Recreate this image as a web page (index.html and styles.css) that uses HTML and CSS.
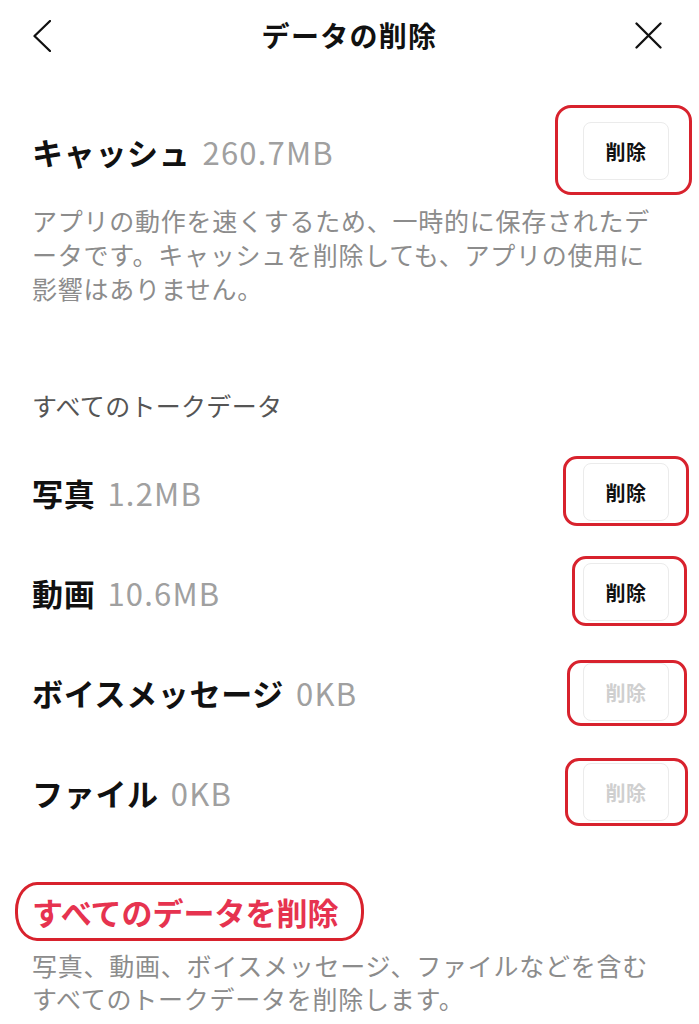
FILE: index.html
```html
<!DOCTYPE html>
<html lang="ja">
<head>
<meta charset="utf-8">
<title>データの削除</title>
<link rel="stylesheet" href="styles.css">
</head>
<body>
<div class="screen">
  <header class="header">
    <div class="hd-left">
      <svg class="ic-back" width="18" height="32" viewBox="0 0 18 32"><polyline points="17,1 1.5,16 17,31" fill="none" stroke="#111" stroke-width="2.3" stroke-linecap="round" stroke-linejoin="round"/></svg>
    </div>
    <h1 class="title">データの削除</h1>
    <div class="hd-right">
      <svg class="ic-close" width="27" height="27" viewBox="0 0 27 27"><path d="M1.5 1.5 L25.5 25.5 M25.5 1.5 L1.5 25.5" fill="none" stroke="#111" stroke-width="2.3" stroke-linecap="round"/></svg>
    </div>
  </header>

  <section class="cache">
    <div class="row row-cache">
      <div class="label"><span class="name">キャッシュ</span><span class="size">260.7MB</span></div>
      <div class="btn-wrap"><button class="btn">削除</button><span class="mark mark-cache"></span></div>
    </div>
    <p class="desc desc-cache">アプリの動作を速くするため、一時的に保存されたデ<br>ータです。キャッシュを削除しても、アプリの使用に<br>影響はありません。</p>
  </section>

  <section class="talk">
    <h2 class="section-label">すべてのトークデータ</h2>
    <div class="row">
      <div class="label"><span class="name">写真</span><span class="size">1.2MB</span></div>
      <div class="btn-wrap"><button class="btn">削除</button><span class="mark mark-photo"></span></div>
    </div>
    <div class="row">
      <div class="label"><span class="name">動画</span><span class="size">10.6MB</span></div>
      <div class="btn-wrap"><button class="btn">削除</button><span class="mark mark-video"></span></div>
    </div>
    <div class="row">
      <div class="label"><span class="name">ボイスメッセージ</span><span class="size">0KB</span></div>
      <div class="btn-wrap"><button class="btn disabled">削除</button><span class="mark mark-voice"></span></div>
    </div>
    <div class="row">
      <div class="label"><span class="name">ファイル</span><span class="size">0KB</span></div>
      <div class="btn-wrap"><button class="btn disabled">削除</button><span class="mark mark-file"></span></div>
    </div>
  </section>

  <section class="all">
    <div class="all-title-wrap"><span class="all-title">すべてのデータを削除</span><span class="mark mark-all"></span></div>
    <p class="desc desc-all">写真、動画、ボイスメッセージ、ファイルなどを含む<br>すべてのトークデータを削除します。</p>
  </section>
</div>
</body>
</html>
```

FILE: styles.css
```css
* { box-sizing: border-box; }
html, body { margin: 0; padding: 0; background: #fff; }
body {
  font-family: "Noto Sans CJK JP", "Noto Sans", sans-serif;
  color: #111;
}
.screen { width: 699px; }

.header {
  height: 70px;
  display: grid;
  grid-template-columns: 1fr auto 1fr;
  align-items: center;
}
.hd-left { padding-left: 33px; display: flex; align-items: center; padding-top: 1px; }
.hd-right { justify-self: end; padding-right: 37px; display: flex; align-items: center; }
.title {
  margin: 0;
  font-size: 28px;
  font-weight: 700;
  letter-spacing: 1.3px;
  line-height: 40px;
  color: #111;
}

.row {
  height: 100px;
  display: flex;
  align-items: center;
  justify-content: space-between;
  padding: 0 30px 0 32px;
}
.row-cache { height: 58px; margin-top: 52px; }

.label { display: flex; align-items: baseline; }
.name {
  font-size: 31px;
  font-weight: 700;
  letter-spacing: 0.7px;
  color: #111;
}
.size {
  margin-left: 12px;
  font-size: 31px;
  font-weight: 400;
  color: #a0a0a0;
  letter-spacing: 1.2px;
}

.btn-wrap { position: relative; display: flex; }
.btn {
  width: 86px;
  height: 58px;
  border: 1px solid #ebebeb;
  border-radius: 8px;
  background: #fff;
  font-family: inherit;
  font-size: 20px;
  font-weight: 700;
  color: #111;
  padding: 0;
  letter-spacing: 0.5px;
}
.btn.disabled { color: #cfcfcf; }

.mark {
  position: absolute;
  border: 3.5px solid #d8222d;
  border-radius: 14px;
  pointer-events: none;
}
.mark-cache { left: -28px; right: -23px; top: -17px; bottom: -15px; border-radius: 16px; }
.mark-photo { left: -20px; right: -20px; top: -7px; bottom: -5px; }
.mark-video { left: -11px; right: -18px; top: -7px; bottom: -5px; }
.mark-voice { left: -16px; right: -18px; top: -3px; bottom: -5px; }
.mark-file { left: -18px; right: -19px; top: -5px; bottom: -5px; }

.desc {
  margin: 0;
  padding: 0 30px 0 32px;
  font-size: 25px;
  line-height: 34px;
  letter-spacing: 0.75px;
  color: #8c8c8c;
}
.desc-cache { margin-top: 23px; }

.section-label {
  margin: 83px 0 20px;
  padding-left: 32px;
  font-size: 25px;
  font-weight: 400;
  line-height: 34px;
  letter-spacing: 0.3px;
  color: #555;
}

.all { padding-top: 50px; }
.all-title-wrap {
  position: relative;
  display: inline-flex;
  margin-left: 32px;
}
.all-title {
  font-size: 31px;
  font-weight: 700;
  line-height: 40px;
  letter-spacing: 0;
  color: #e6334f;
}
.mark-all { left: -17px; right: -25px; top: -10px; bottom: -9px; border-radius: 22px / 28px; }
.desc-all { margin-top: 17px; line-height: 33px; }
```
